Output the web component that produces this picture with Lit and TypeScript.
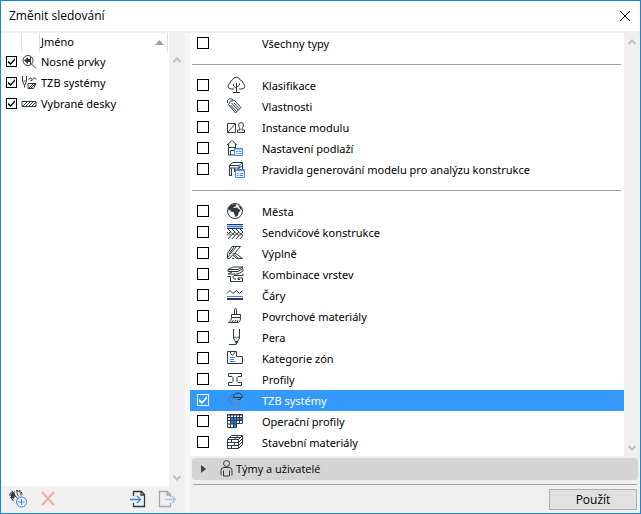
import { LitElement, html, svg, css } from "lit";
import { customElement, property } from "lit/decorators.js";
import { classMap } from "lit/directives/class-map.js";

/* Every glyph is drawn on a grid as tall as a list row (21 units). */
const glyphs: Record<string, unknown> = {
  tree: svg`<path d="M8 14H5a2.900 2.900 0 0 1-1-5.600A3 3 0 0 1 6.300 5.200a4.200 4.200 0 0 1 8 0A3 3 0 0 1 17 8.400 2.900 2.900 0 0 1 16 14h-3M10.500 8v9M7 17.500h7M10.500 13.500L7.500 11V9M10.500 12.500l3-2.500V8.500"/>`,
  tag: svg`<path d="M2.500 8.500L4.500 5l4-.5 6.500 7-5.500 5.500zM1.500 7V4.500L4 2.500l3 1M5.500 7l6.500 7M4.500 9l6 6.500M8 7l5.500 6"/>`,
  module: svg`<path d="M1.500 6.500h8v9h-8zM1.500 15.500l8-9M11.500 15.500v-2.500h2.500c.500-1.500-1.400-2.500-1.400-5a2.400 2.400 0 0 1 4.800 0c0 2.500-1.900 3.500-1.400 5h2.500v2.500z"/>`,
  story: svg`<path d="M1 7L6 2.500 11 7M2.500 6v11h6M9.500 6v4.500M2.500 9.500h7M4.500 17v-4.500h3.500"/><path class="accent box" d="M8.500 10.500h8v7h-8z"/><path class="accent" d="M8.500 11h8M10 13.500h1.500M12.500 13.500H15.500M10 15.500h1.500M12.500 15.500H15.500"/>`,
  frame: svg`<path d="M3.500 16.500V6L7 3.500h9.500V10M3.500 6.500h9.500l3.500-3M3.500 9h9.500l3.500-2.500M13 6.500V10M5.500 16.500V9M3 16.500h3M8.500 9v4"/><path class="accent box" d="M9.500 10.500h9v8h-9z"/><path class="accent" d="M9.500 11.500h9M11 14.500h1.500M13.500 14.500H17M11 16.500h1.500M13.500 16.500H17"/>`,
  globe: svg`<circle cx="9" cy="10" r="7.500"/><path class="solid" d="M2 8l2-3.500L8 3l2.500.5-1 2L7 6.500l1.500.5 3-.5 1 1.500 2 1-2 3-.500 2.500-2.500 1.500-1-2.500L7.500 11 4.500 10.500 4.500 8.500 3 9.500z M12 4l3 2 1 3-1.500-.5-1-2z"/>`,
  composite: svg`<path d="M1 2.500h16M1 6.500h16M2 7l3 3h-1l-3 3.500M6 7l3 3-4 3.500M10 7l3 3-4 3.500M14 7l3 3-4 3.500M1 10l4 3.500-3 3.500M5 10.500l4 3-3 3.500M9 10.500l4 3-3 3.500M13 10.500l4 3-3 3.500"/><path class="accent thick" d="M1 4.500h16"/>`,
  fill: svg`<path d="M1.500 10.500L6 3.500h8.500L9 10l7.500 5.500h-6L6.500 12M1.500 14.500L10 4M1.500 15.500h2L6.500 12M6 15.500h2M3 11L8 4M9 10l-2 2.500M1.500 10.500v5M6.500 10l6 5.500"/>`,
  layers: svg`<path d="M2 5.500L7 3h10l-5 2.500zM2 5.500v2h10l5-3M2 10l4-2M2 10h10l5-3V5M17 9.500v2H8a2 2 0 0 0 0 3.500h2M1.500 12.500h3v5h12v-3.500H12v1.500h2"/>`,
  lines: svg`<path d="M1 8.500L4 5.500l3 3 3.500-3 3 3 3-3"/><path class="accent" d="M1 11.500h16"/><path class="thick" d="M1 14h16"/>`,
  brush: svg`<path d="M8.500 8.500V3.500a1 1 0 0 1 2 0v5M5.500 8.500h9v3h-9zM5.500 11.500c0 2.500-1 4-3 5h10c1.500-1 2-3 2-5M5.500 16.500l2-2.500M8.500 16.500l1.500-2.500M11 16.500l1-2.500"/>`,
  pen: svg`<path d="M7.500 2v9l3 5.500 3-5.500V2M7.500 11c1-1.200 2-1.200 3 0 1-1.200 2-1.200 3 0M3 17.500h7.500M9.500 14.500h2l-1 2.500z"/>`,
  zone: svg`<path d="M1.500 3.500h9v5h6v7h-15zM4.500 3.500v2l2 2 3-4"/><path class="accent" d="M4 9.500h5M4 11.500h4M4 13.500h5"/>`,
  profile: svg`<path d="M2.500 4.500h13v3h-3.500l-1 1v4l1 1h3.500v3h-13v-3H6l1-1v-4l-1-1H2.500z"/>`,
  mep: svg`<path class="muted-blue" d="M8 4.500a4.500 4.500 0 1 0-1 9M6.500 5a3 3 0 0 0 1.500 5"/><path d="M7.500 7.500a4.500 4.500 0 0 1 9 0zM14.500 7.500v2h-3"/><path class="muted" d="M7.500 9c1 1.500 3 2 5.500 1.500a3.800 3.800 0 0 1-1.500 7H7.500c2-.500 3.500-2 3-3.500L8 12.500z"/>`,
  grid: svg`<path class="accent-solid" d="M4 7h12v3H4zM4 10h6v3H4zM7 13h3v3H7z"/><path d="M1.500 3.500h15v9h-6v4h-9zM4.500 3.500v13M7.500 3.500v13M10.500 3.500v9M13.500 3.500v9M1.500 6.500h15M1.500 9.500h15M1.500 13h9M1.500 4h15"/>`,
  bricks: svg`<path d="M1.500 7.500h11v9h-11zM1.500 7.500l4-4h11v9l-4 4M12.500 10.500l4-4M12.500 7.500l4-4M12.500 13.500l4-4M1.500 10.500h11M1.500 13.500h11M5.500 7.500v3M8.500 10.500v3M5.500 13.500v3M8 7.500l4-4M3.500 5.500h11"/>`,
  lens: svg`<circle cx="7" cy="9.500" r="5"/><path d="M10.500 13l4.500 4.500M9.500 6v7"/><path class="solid" d="M3 9.500L7 6v2h3v3H7v2z"/>`,
  tools: svg`<path d="M1.500 4v5l2 4.500 2-4.500V4M2.500 9h2M3.500 13.500v2M8 7.500a1.500 1.500 0 0 1 3 0v1H9.500M12 7.500a1.500 1.500 0 0 1 3 0M7 11.500h8l-2.500 5H7zM8 16l4-4M10 16l4-4"/>`,
  slab: svg`<path d="M1 8.500h14v5H1zM2 13l4-4M5 13l4-4M8 13l4-4M11 13l4-4"/>`,
  user: svg`<circle cx="7.500" cy="5.500" r="3"/><path d="M2.500 17.500A1.500 1.500 0 0 1 2 16v-3.500a3 3 0 0 1 3-3h5a3 3 0 0 1 3 3V16a1.500 1.500 0 0 1-.5 1.500M4.500 12.500v5.500h6v-5.500"/>`,
  add: svg`<path d="M2 8V5.500L5 3M4.500 12C3 10 3 7.500 5 6.500M4 4l6 7M7 3c-2 1-1 4 1 6M10 2.500c-2 1-1 4 1 6M8 2.500c3 0 5 2 5 5M11 2.500c2 .500 3 2 3 4M2.500 9l3 4"/><path class="solid" d="M2.500 6L6 4l1 3-1 4-2-1z"/><circle class="accent halo" cx="13.500" cy="14" r="5"/><path class="accent" d="M13.500 11v6M10.500 14h6"/>`,
  remove: svg`<path class="danger" d="M2 4l12 13M14 4L2 17"/>`,
  import: svg`<path class="bold" d="M4.500 8V3.500h8l3 3v12h-11V15M12 3.500v3.500h3.500"/><path class="accent bold" d="M1 11.500h10M8 8l3.500 3.500L8 15"/>`,
  export: svg`<g opacity=".4"><path class="bold" d="M12.500 9V6.500l-3-3h-8v15h11V15M9 3.500V7h3.500"/><path class="accent bold" d="M7 11.500h10M14 8l3.500 3.500L14 15"/></g>`,
};

@customElement("row-icon")
class RowIcon extends LitElement {
  @property() name = "";
  static styles = css`
    :host { display: block; width: 20px; height: 21px; }
    svg { display: block; width: 100%; height: 100%; fill: none; stroke: #2f3b43; }
    .accent { stroke: #3a86f7; }
    .box { fill: #fff; }
    .halo { fill: #f0f0f0; }
    .bold { stroke-width: 1.3; }
    .thick { stroke-width: 2; }
    .solid { fill: #2f3b43; stroke: none; }
    .accent-solid { fill: #2f7cf6; stroke: none; }
    .muted { stroke: #808b95; }
    .muted-blue { stroke: #2a7ce8; }
    .danger { stroke: #fbab9d; stroke-width: 2; }
  `;
  render() {
    return html`<svg viewBox="0 0 20 21" aria-hidden="true">${glyphs[this.name]}</svg>`;
  }
}

@customElement("scroll-track")
class ScrollTrack extends LitElement {
  static styles = css`
    :host { display: flex; flex-direction: column; justify-content: space-between; width: 16px; background: #f0f0f0; }
    svg { display: block; width: 16px; height: 17px; fill: none; stroke: #bfbfbf; stroke-width: 2; }
  `;
  render() {
    return html`
      <svg viewBox="0 0 16 17"><path d="M4.500 11L8 7.500l3.500 3.500" /></svg>
      <svg viewBox="0 0 16 17"><path d="M4.500 7L8 10.500 11.500 7" /></svg>
    `;
  }
}

type Entry = { icon?: string; text: string; on?: boolean };

const watched: Entry[] = [
  { icon: "lens", text: "Nosné prvky" },
  { icon: "tools", text: "TZB systémy" },
  { icon: "slab", text: "Vybrané desky" },
];

const groups: Entry[][] = [
  [{ text: "Všechny typy" }],
  [
    { icon: "tree", text: "Klasifikace" },
    { icon: "tag", text: "Vlastnosti" },
    { icon: "module", text: "Instance modulu" },
    { icon: "story", text: "Nastavení podlaží" },
    { icon: "frame", text: "Pravidla generování modelu pro analýzu konstrukce" },
  ],
  [
    { icon: "globe", text: "Města" },
    { icon: "composite", text: "Sendvičové konstrukce" },
    { icon: "fill", text: "Výplně" },
    { icon: "layers", text: "Kombinace vrstev" },
    { icon: "lines", text: "Čáry" },
    { icon: "brush", text: "Povrchové materiály" },
    { icon: "pen", text: "Pera" },
    { icon: "zone", text: "Kategorie zón" },
    { icon: "profile", text: "Profily" },
    { icon: "mep", text: "TZB systémy", on: true },
    { icon: "grid", text: "Operační profily" },
    { icon: "bricks", text: "Stavební materiály" },
  ],
];

@customElement("app-root")
class AppRoot extends LitElement {
  static styles = css`
    :host {
      display: flex; flex-direction: column; box-sizing: border-box; min-height: 100vh;
      border: 1px solid #1883d7; background: #f0f0f0; color: #000;
      font: 11px/21px "Noto Sans", "Open Sans", sans-serif;
    }
    * { box-sizing: border-box; }
    button { font: inherit; color: inherit; margin: 0; padding: 0; border: 0; background: none; }
    .title { display: flex; align-items: center; justify-content: space-between; height: 30px; padding: 0 9px 0 8px; background: #fff; }
    h1 { margin: 0; font: 12px/20px "Open Sans", sans-serif; }
    .close { width: 12px; height: 12px; }
    .close svg { display: block; width: 12px; height: 12px; stroke: #000; }
    .body { flex: 1; display: flex; padding-top: 2px; }
    .left { width: 184px; flex: none; display: flex; flex-direction: column; }
    .left scroll-track { padding-top: 18px; }
    .gutter { width: 5px; flex: none; background: #f7f7f7; }
    .right { flex: 1; min-width: 0; display: flex; flex-direction: column; }
    .pane { flex: 1; display: flex; }
    .sheet { flex: 1; min-width: 0; background: #fff; }

    table { width: 100%; table-layout: fixed; border-collapse: collapse; }
    th, td { padding: 0; font-weight: 400; text-align: left; height: 21px; }
    th { height: 18px; line-height: 18px; }
    .c1 { width: 20px; }
    .c2 { width: 18px; }
    th + th { box-shadow: inset 1px 0 #e0e0e0; }
    .sort { display: flex; align-items: center; justify-content: space-between; padding: 0 3px 0 2px; border-right: 1px solid #e0e0e0; margin-right: 1px; }
    .sort svg { width: 9px; height: 5px; fill: #a0a0a0; }
    td label { display: block; padding-left: 2px; }

    input {
      appearance: none; flex: none; width: 12px; height: 12px; margin: 0;
      border: 1px solid #000; background: #fff; display: grid; place-items: center;
    }
    input:checked::after {
      content: ""; width: 8px; height: 8px; background: #000;
      clip-path: polygon(0 38%, 38% 70%, 100% 0, 100% 30%, 38% 100%, 0 68%);
    }
    td input { width: 11px; height: 11px; margin-left: 5px; }
    td input:checked::after { width: 7px; height: 7px; }

    .foot { height: 27px; display: flex; align-items: center; padding: 0 7px 2px; }
    .gap { flex: 1; }
    .add { margin-right: 12px; }
    .import { margin-right: 9px; }

    ul { list-style: none; margin: 0; padding: 0; }
    .rule { height: 21px; border: 0; margin: 0 3px 0 2px; display: flex; align-items: center; }
    .rule::before { content: ""; flex: 1; height: 1px; background: #a0a0a0; }
    .row { display: flex; align-items: center; height: 21px; padding: 0 7px; }
    .row input { margin-bottom: 1px; }
    .row span { margin-left: 16px; white-space: nowrap; }
    .row row-icon { margin-left: 17px; }
    .row.on { background: #3399ff; color: #fff; }
    .row.on input { border-color: #fff; background: #3399ff; }
    .row.on input::after { background: #fff; }
    .types { padding-bottom: 3px; }

    .teams {
      display: flex; align-items: center; height: 22px; margin: 2px 2px 4px; padding: 0 0 1px 9px;
      background: #d5d5d5; border-radius: 3px; text-align: left; font-family: "Open Sans", sans-serif;
    }
    .teams svg { width: 5px; height: 8px; fill: #404040; margin-right: 13px; }
    .teams row-icon { margin-right: -3px; }
    .actions { display: flex; justify-content: flex-end; margin: 0 3px; padding: 4px 0 3px; border-top: 1px solid #a0a0a0; }
    .apply { width: 88px; height: 21px; border: 1px solid #adadad; background: #e1e1e1; font: 12px/18px "Open Sans", sans-serif; }
  `;

  render() {
    return html`
      <header class="title">
        <h1>Změnit sledování</h1>
        <button class="close" aria-label="Zavřít">
          <svg viewBox="0 0 12 12"><path d="M1 1l10 10M11 1L1 11" /></svg>
        </button>
      </header>
      <main class="body">
        <section class="left">
          <div class="pane">
            <div class="sheet">
              <table>
                <thead>
                  <tr>
                    <th class="c1"></th>
                    <th class="c2"></th>
                    <th>
                      <div class="sort">Jméno<svg viewBox="0 0 9 5"><path d="M4.500 0L9 5H0z" /></svg></div>
                    </th>
                  </tr>
                </thead>
                <tbody>
                  ${watched.map(
                    (w, i) => html`<tr>
                      <td><input type="checkbox" id="w${i}" checked /></td>
                      <td><row-icon name=${w.icon!}></row-icon></td>
                      <td><label for="w${i}">${w.text}</label></td>
                    </tr>`
                  )}
                </tbody>
              </table>
            </div>
            <scroll-track></scroll-track>
          </div>
          <div class="foot">
            <button class="add" aria-label="Přidat"><row-icon name="add"></row-icon></button>
            <button aria-label="Odstranit"><row-icon name="remove"></row-icon></button>
            <div class="gap"></div>
            <button class="import" aria-label="Importovat"><row-icon name="import"></row-icon></button>
            <button aria-label="Exportovat" disabled><row-icon name="export"></row-icon></button>
          </div>
        </section>
        <div class="gutter"></div>
        <section class="right">
          <div class="pane">
            <div class="sheet types">
              ${groups.map(
                (g, i) => html`${i ? html`<hr class="rule" />` : ""}
                  <ul>
                    ${g.map(
                      (e) => html`<li>
                        <label class=${classMap({ row: true, on: !!e.on })}>
                          <input type="checkbox" ?checked=${e.on} />
                          <row-icon name=${e.icon ?? ""}></row-icon>
                          <span>${e.text}</span>
                        </label>
                      </li>`
                    )}
                  </ul>`
              )}
            </div>
            <scroll-track></scroll-track>
          </div>
          <button class="teams" aria-expanded="false">
            <svg viewBox="0 0 5 8"><path d="M0 0l5 4-5 4z" /></svg>
            <row-icon name="user"></row-icon>
            Týmy a uživatelé
          </button>
          <div class="actions"><button class="apply">Použít</button></div>
        </section>
      </main>
    `;
  }
}
